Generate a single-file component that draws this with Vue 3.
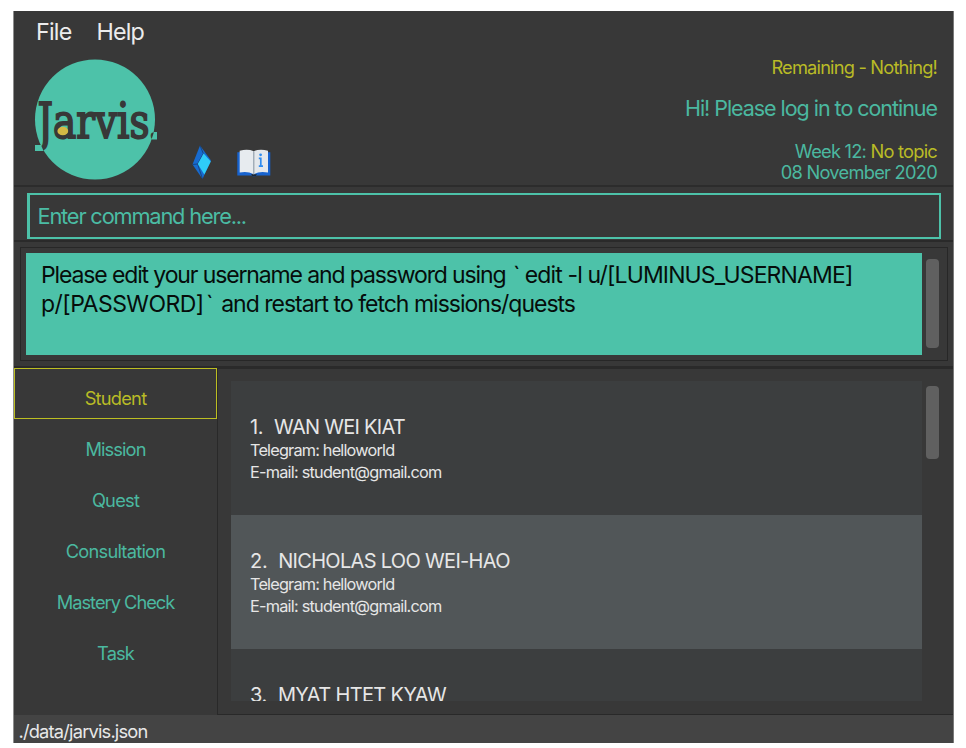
<script setup>
const menus = ['File', 'Help']

const tabs = [
  { name: 'Student', spacing: -0.78 },
  { name: 'Mission', spacing: -0.9 },
  { name: 'Quest', spacing: -0.78 },
  { name: 'Consultation', spacing: -0.77 },
  { name: 'Mastery Check', spacing: -1.02 },
  { name: 'Task', spacing: -0.9 },
]

const students = [
  { id: 1, name: 'WAN WEI KIAT', spacing: -0.72 },
  { id: 2, name: 'NICHOLAS LOO WEI-HAO', spacing: -0.68 },
  { id: 3, name: 'MYAT HTET KYAW', spacing: -0.64 },
]
</script>

<template>
  <div class="window">
    <header class="header">
      <nav class="menu">
        <span v-for="m in menus" :key="m">{{ m }}</span>
      </nav>
      <div class="banner">
        <svg class="logo" width="124" height="124" viewBox="33 57 124 124">
          <circle cx="95" cy="119.5" r="60" fill="#4dc2a9" />
          <g class="logo-text">
            <text x="37.500" y="138.500" font-size="51" textLength="15.500" lengthAdjust="spacingAndGlyphs">J</text>
            <text x="53" y="138.300" font-size="49" textLength="96.500" lengthAdjust="spacingAndGlyphs">arvis</text>
            <text x="149.500" y="138" font-size="34" textLength="6.500" lengthAdjust="spacingAndGlyphs">.</text>
          </g>
          <path d="M35 145H41L43.500 151H35Z" fill="#4dc2a9" />
          <path d="M154 132H157V139.500H151.500Z" fill="#4dc2a9" />
          <ellipse cx="62.800" cy="131" rx="5.400" ry="4.300" fill="#d4b945" />
        </svg>
        <svg class="gem" width="20" height="35" viewBox="0 0 20 35">
          <path d="M8 0.5 19 15.5 10.5 34 0.5 19.5Z" fill="#176bd0" />
          <path d="M8 0.5 11.3 8.5 5.6 19 0.5 19.5M5.6 19 10.5 34" fill="none" stroke="#183e70" stroke-width="0.8" />
          <path d="M11.6 8.5 18.8 16.5 12.3 29.5 5.8 19Z" fill="#2fcdf9" />
        </svg>
        <svg class="book" width="34" height="29" viewBox="0 0 34 29">
          <path d="M0.3 3.2H33.3V26.5H19.5Q17 29 14.500 26.500H0.300Z" fill="#1763cf" />
          <path d="M14 25.300H20L18.500 27.600H15.500Z" fill="#20282f" />
          <path d="M2.700 1.800Q10.500-0.400 16.800 2.200V25.200Q10 21.700 2.700 23.600Z" fill="#e7ebef" />
          <path d="M16.800 2.200Q23-0.400 31 1.800V23.600Q23 21.700 16.800 25.200Z" fill="#e4e8ec" />
          <path d="M16.800 2.200V25.200" stroke="#9aa4ad" stroke-width="1.200" />
          <path d="M21.800 9.300H23.800V17.300M21.800 17.200H26" fill="none" stroke="#2f8cf0" stroke-width="1.700" />
          <circle cx="23.600" cy="5.800" r="1.400" fill="#2f8cf0" />
        </svg>
        <div class="status">
          <div class="remaining">Remaining - Nothing!</div>
          <div class="greeting">Hi! Please log in to continue</div>
          <div class="week">Week 12: <span>No topic</span></div>
          <div class="date">08 November 2020</div>
        </div>
      </div>
    </header>

    <section class="command">
      <div class="field">Enter command here...</div>
    </section>

    <section class="result">
      <div class="result-frame">
        <div class="message">
          <div><span class="lead">Please edit your username and password using </span><span class="tick">`</span><span class="code">edit -l u/[LUMINUS_USERNAME]</span></div>
          <div><span class="secret">p/[PASSWORD]</span><span class="tick end">`</span><span class="tail"> and restart to fetch missions/quests</span></div>
        </div>
        <div class="thumb thumb-result"></div>
      </div>
    </section>

    <main class="content">
      <aside class="tabs">
        <div
          v-for="(t, i) in tabs"
          :key="t.name"
          class="tab"
          :class="{ active: i === 0 }"
          :style="{ letterSpacing: t.spacing + 'px' }"
        >{{ t.name }}</div>
      </aside>
      <div class="panel">
        <div class="list">
          <article v-for="s in students" :key="s.id" class="card">
            <div class="name">
              <span class="num">{{ s.id }}.</span>
              <span :style="{ letterSpacing: s.spacing + 'px' }">{{ s.name }}</span>
            </div>
            <div class="telegram">Telegram: helloworld</div>
            <div class="email">E-mail: student@gmail.com</div>
          </article>
        </div>
        <div class="thumb thumb-list"></div>
      </div>
    </main>

    <footer class="footer">./data/jarvis.json</footer>
  </div>
</template>

<style>
body {
  background: #fff;
}
</style>

<style scoped>
* {
  box-sizing: border-box;
}
.window {
  width: 941px;
  height: 732px;
  margin: 11px 0 0 13px;
  border-left: 1px solid #8e8e8e;
  border-right: 1px solid #7a7a7a;
  background: #383838;
  display: flex;
  flex-direction: column;
  font-family: Inter, 'Liberation Sans', sans-serif;
  white-space: nowrap;
  overflow: hidden;
}
.header {
  height: 176px;
  border-bottom: 2px solid #2c2c2c;
}
.menu {
  height: 42px;
  padding-left: 22px;
  display: flex;
  gap: 25px;
  font-size: 23.3px;
  line-height: 42px;
  letter-spacing: -0.8px;
  color: #ececec;
}
.banner {
  height: 132px;
  display: flex;
  align-items: flex-start;
  padding: 4px 16px 0 19px;
}
.logo {
  flex: none;
  overflow: visible;
}
.logo-text {
  font-family: 'DejaVu Serif', serif;
  fill: #383838;
  stroke: #383838;
  stroke-width: 2px;
}
.gem {
  margin: 88px 0 0 35px;
}
.book {
  margin: 92px 0 0 25px;
}
.status {
  margin-left: auto;
  text-align: right;
  font-size: 18.3px;
  color: #4bb8a0;
}
.remaining {
  margin-top: -1px;
  line-height: 22px;
  letter-spacing: -0.82px;
  color: #b9bb26;
}
.greeting {
  margin-top: 16px;
  font-size: 21.5px;
  line-height: 28px;
  letter-spacing: -1.04px;
}
.week {
  margin-top: 18px;
  line-height: 22px;
  letter-spacing: -0.77px;
}
.week span {
  color: #b9bb26;
}
.date {
  line-height: 21px;
  letter-spacing: -0.74px;
}
.command {
  height: 55px;
  padding: 6px 12px 0 13px;
  border-bottom: 2px solid #2a2a2a;
}
.field {
  height: 46px;
  padding-left: 7.5px;
  border: 2px solid #4dc2a9;
  border-left-width: 3px;
  font-size: 21.8px;
  line-height: 42px;
  letter-spacing: -1.18px;
  color: #4bbca4;
}
.result {
  height: 127px;
  padding: 5px 5px 0 6px;
  border-bottom: 3px solid #2a2a2a;
}
.result-frame {
  height: 114px;
  padding: 5px 8px 0 5px;
  border: 1px solid #272727;
  display: flex;
}
.message {
  width: 896px;
  height: 102px;
  padding: 8px 0 0 15px;
  background: #4dc2a9;
  color: #060d0b;
  font-size: 23px;
  line-height: 29px;
}
.lead {
  letter-spacing: -1.13px;
}
.tick {
  display: inline-block;
  width: 14px;
  padding-right: 2px;
  text-align: center;
}
.tick.end {
  width: 12px;
  padding-right: 0;
}
.code {
  letter-spacing: -0.86px;
}
.secret {
  letter-spacing: -0.54px;
}
.tail {
  letter-spacing: -1px;
}
.thumb {
  flex: none;
  width: 13px;
  margin-left: 4px;
  border-radius: 4px;
  background: #606060;
}
.thumb-result {
  height: 89px;
  margin-top: 6px;
}
.content {
  flex: 1;
  min-height: 0;
  display: flex;
}
.tabs {
  width: 204px;
  margin-top: -1px;
  border-right: 1px solid #292929;
}
.tab {
  width: 203px;
  height: 51px;
  padding-top: 8px;
  text-align: center;
  font-size: 18.3px;
  line-height: 45px;
  color: #4bb8a0;
}
.tab.active {
  padding-top: 7px;
  border: 1px solid #bcbe22;
  color: #b9bb26;
}
.panel {
  flex: 1;
  display: flex;
  padding-top: 12px;
  padding-left: 13px;
  border-bottom: 1px solid #292929;
}
.list {
  width: 691px;
  height: 320px;
  overflow: hidden;
}
.card {
  height: 134px;
  padding: 34px 0 0 19px;
  background: #3c3e3f;
  color: #e6e6e6;
}
.card:nth-child(even) {
  background: #515658;
}
.name {
  display: flex;
  font-size: 20px;
  line-height: 25px;
}
.num {
  margin-right: 10.8px;
  letter-spacing: -0.3px;
}
.telegram {
  font-size: 16.3px;
  line-height: 21px;
  letter-spacing: -0.81px;
}
.email {
  font-size: 16.3px;
  line-height: 22px;
  letter-spacing: -0.77px;
}
.thumb-list {
  height: 73px;
  margin-top: 5px;
}
.footer {
  height: 28px;
  padding-left: 4.5px;
  background: #444;
  color: #e8e8e8;
  font-size: 18.3px;
  line-height: 32px;
  letter-spacing: -0.81px;
}
</style>
